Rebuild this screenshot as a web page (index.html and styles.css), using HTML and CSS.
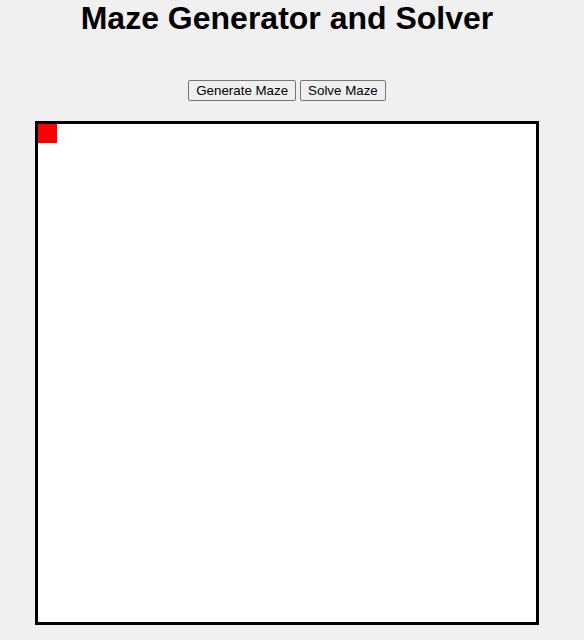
FILE: index.html
```html
<!DOCTYPE html>
<html>
<head>
<meta charset="utf-8">
<link rel="stylesheet" href="styles.css">
</head>
<body>
<div class="page">
  <h1 class="title">Maze Generator and Solver</h1>
  <div class="controls">
    <button class="btn">Generate Maze</button>
    <button class="btn">Solve Maze</button>
  </div>
  <div class="maze">
    <div class="cell-start"></div>
  </div>
</div>
</body>
</html>
```
FILE: styles.css
```css
html, body {
  margin: 0;
  padding: 0;
  background: #f0f0f0;
}
.page {
  width: 574px;
  display: flex;
  flex-direction: column;
  align-items: center;
  font-family: "Liberation Sans", Arial, sans-serif;
}
.title {
  margin: 0;
  font-size: 32px;
  line-height: 37px;
  font-weight: bold;
  color: #000;
}
.controls {
  margin-top: 43px;
  display: flex;
  gap: 4px;
}
.btn {
  font-family: "Liberation Sans", Arial, sans-serif;
  font-size: 13.33px;
  height: 21px;
  padding: 1px 7px;
  background: #efefef;
  border: 1px solid #767676;
  border-radius: 2px;
  color: #000;
}
.maze {
  margin-top: 20px;
  width: 498px;
  height: 498px;
  border: 3px solid #000;
  background: #fff;
}
.cell-start {
  width: 19px;
  height: 19px;
  background: #ff0000;
}
```
